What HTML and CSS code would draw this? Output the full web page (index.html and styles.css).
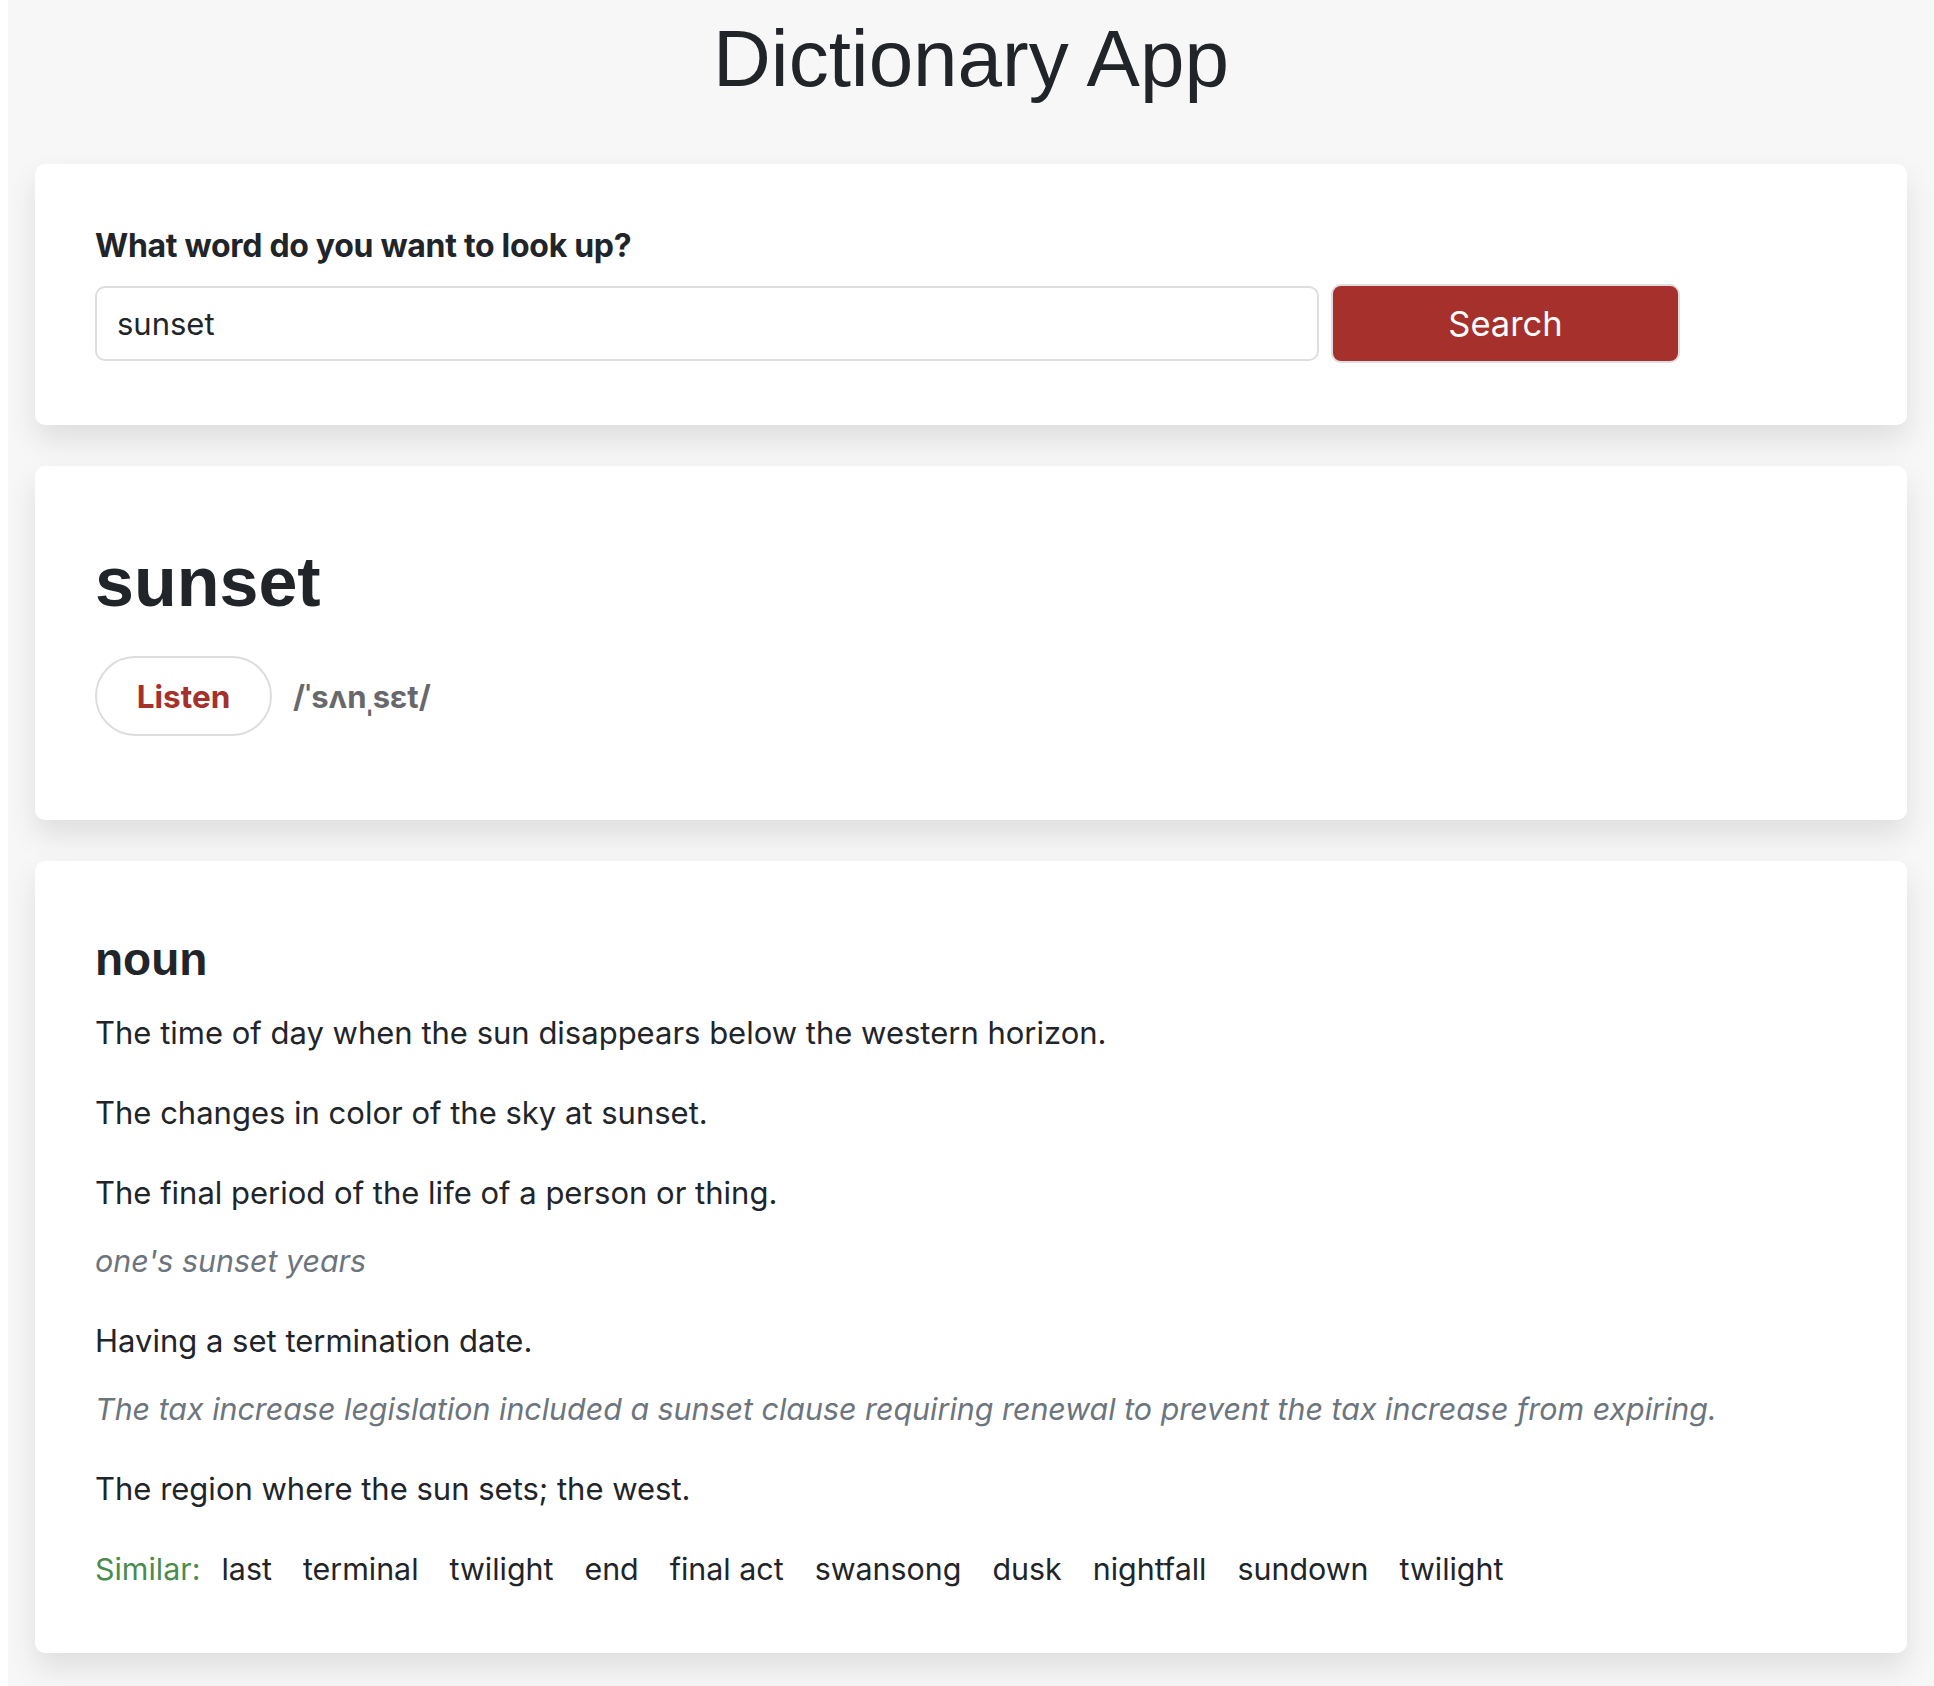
FILE: index.html
```html
<!DOCTYPE html>
<html lang="en">
<head>
    <meta charset="UTF-8">
    <meta name="viewport" content="width=device-width, initial-scale=1.0">
    <title>Dictionary App</title>
    <link rel="stylesheet" href="styles.css">
</head>
<body>
    <div class="app">
        <h1 class="app-title">Dictionary App</h1>

        <section class="card search-card">
            <form class="search-form" onsubmit="return false;">
                <label for="word" class="search-label">What word do you want to look up?</label>
                <div class="search-row">
                    <input type="text" id="word" class="search-input" value="sunset">
                    <button type="submit" class="search-btn">Search</button>
                </div>
            </form>
        </section>

        <section class="card word-card">
            <h2 class="word">sunset</h2>
            <div class="pronunciation">
                <button class="listen-btn">Listen</button>
                <span class="phonetic">/ˈsʌnˌsɛt/</span>
            </div>
        </section>

        <section class="card meaning-card">
            <h3 class="part-of-speech">noun</h3>
            <p class="definition">The time of day when the sun disappears below the western horizon.</p>
            <p class="definition">The changes in color of the sky at sunset.</p>
            <p class="definition">The final period of the life of a person or thing.</p>
            <p class="example">one's sunset years</p>
            <p class="definition">Having a set termination date.</p>
            <p class="example">The tax increase legislation included a sunset clause requiring renewal to prevent the tax increase from expiring.</p>
            <p class="definition">The region where the sun sets; the west.</p>
            <div class="synonyms">
                <span class="synonyms-label">Similar:</span>
                <span class="synonym">last</span>
                <span class="synonym">terminal</span>
                <span class="synonym">twilight</span>
                <span class="synonym">end</span>
                <span class="synonym">final act</span>
                <span class="synonym">swansong</span>
                <span class="synonym">dusk</span>
                <span class="synonym">nightfall</span>
                <span class="synonym">sundown</span>
                <span class="synonym">twilight</span>
            </div>
        </section>
    </div>
</body>
</html>
```

FILE: styles.css
```css
html {
    background: #fff;
}

body {
    margin: 0 0 0 8px;
    min-height: 100vh;
    background: #f7f7f7;
    color: #212529;
    font-family: Inter, "Noto Sans", sans-serif;
}

.app {
    padding: 0 27px 31px;
}

.app-title {
    margin: 13px 0 59px;
    font-family: "Liberation Sans", Arial, sans-serif;
    font-size: 80px;
    font-weight: normal;
    line-height: 92px;
    text-align: center;
}

.card {
    background: white;
    border-radius: 10px;
    padding: 60px;
    margin-bottom: 41px;
    box-shadow: 0 15px 30px rgba(0,0,0,0.1);
}

/* search */
.search-card {
    padding-bottom: 62px;
}

.search-label {
    display: block;
    margin: 4px 0 20px;
    font-size: 32px;
    font-weight: 700;
    line-height: 36px;
    letter-spacing: -0.3px;
}

.search-row {
    display: flex;
    align-items: center;
    gap: 12px;
    max-width: 1585px;
}

.search-input {
    flex: 1;
    height: 75px;
    box-sizing: border-box;
    padding: 0 20px;
    border: 2px solid #dedede;
    border-radius: 10px;
    font-family: inherit;
    font-size: 31px;
    color: #212529;
    outline: none;
}

.search-btn {
    flex: 0 0 349px;
    height: 79px;
    background: #a5302c;
    color: white;
    border: 2px solid #dedede;
    border-radius: 10px;
    font-family: inherit;
    font-size: 34.5px;
}

/* word */
.word {
    margin: 16px 0 34px;
    font-family: "Liberation Sans", Arial, sans-serif;
    font-size: 70px;
    font-weight: 700;
    line-height: 80px;
}

.pronunciation {
    display: flex;
    align-items: center;
    gap: 21px;
    margin-bottom: 24px;
}

.listen-btn {
    width: 177px;
    height: 80px;
    background: white;
    border: 2px solid #ddd;
    border-radius: 40px;
    color: #a5302c;
    font-family: inherit;
    font-size: 31.5px;
    font-weight: 700;
}

.phonetic {
    color: #66686b;
    font-size: 31px;
    font-weight: 700;
}

/* meanings */
.part-of-speech {
    margin: 12px 0 23px;
    font-family: "Liberation Sans", Arial, sans-serif;
    font-size: 46px;
    font-weight: 700;
    line-height: 53px;
}

.definition,
.example {
    margin: 0 0 32px;
    font-size: 31px;
    line-height: 48px;
}

.example {
    margin-top: -12px;
    color: #6c757d;
    font-size: 30.4px;
    font-style: italic;
}

.synonyms {
    display: flex;
    font-size: 30.4px;
    line-height: 48px;
}

.synonyms-label {
    color: #4a8b4f;
    margin-right: 21px;
}

.synonym {
    margin-right: 31px;
}
```
